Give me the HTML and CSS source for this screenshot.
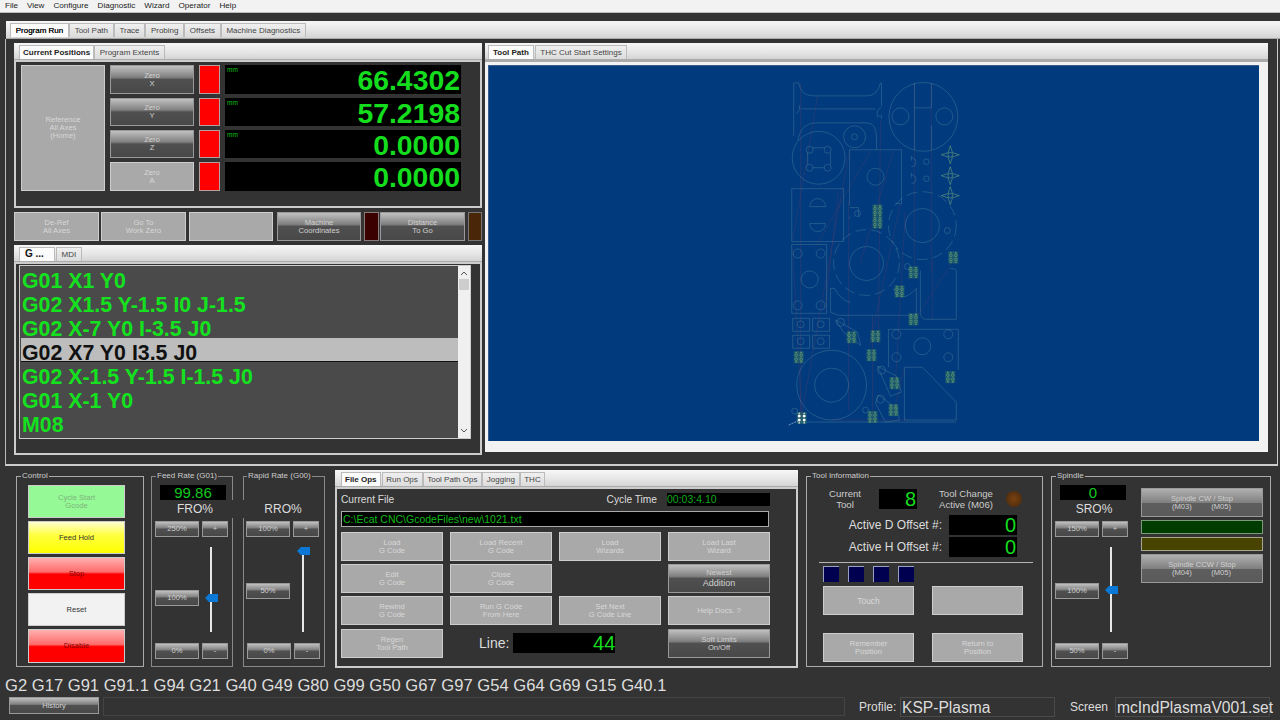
FILE: index.html
```html
<!DOCTYPE html>
<html lang="en">
<head>
<meta charset="utf-8">
<title>Mach4 Plasma</title>
<link rel="stylesheet" href="styles.css">
</head>
<body>
<nav class="menubar"><span>File</span><span>View</span><span>Configure</span><span>Diagnostic</span><span>Wizard</span><span>Operator</span><span>Help</span></nav>

<div class="tabstrip main-tabs">
  <span class="tab active">Program Run</span><span class="tab">Tool Path</span><span class="tab">Trace</span><span class="tab">Probing</span><span class="tab">Offsets</span><span class="tab">Machine Diagnostics</span>
</div>

<main class="main">
  <section class="left-col">
    <div class="tabstrip sub-tabs">
      <span class="tab active strong">Current Positions</span><span class="tab">Program Extents</span>
    </div>
    <div class="panel pos-panel">
      <button class="btn flat ref">Reference<br>All Axes<br>(Home)</button>
      <button class="btn grad">Zero<br>X</button><div class="led red"></div><div class="dro big"><small>mm</small>66.4302</div>
      <button class="btn grad">Zero<br>Y</button><div class="led red"></div><div class="dro big"><small>mm</small>57.2198</div>
      <button class="btn grad">Zero<br>Z</button><div class="led red"></div><div class="dro big"><small>mm</small>0.0000</div>
      <button class="btn flat">Zero<br>A</button><div class="led red"></div><div class="dro big">0.0000</div>
    </div>
    <div class="coord-row">
      <button class="btn flat">De-Ref<br>All Axes</button>
      <button class="btn flat">Go To<br>Work Zero</button>
      <button class="btn flat"></button>
      <button class="btn grad">Machine<br>Coordinates</button>
      <div class="led maroon"></div>
      <button class="btn grad">Distance<br>To Go</button>
      <div class="led brown"></div>
    </div>
    <div class="tabstrip sub-tabs">
      <span class="tab active gtab">G ...</span><span class="tab">MDI</span>
    </div>
    <div class="panel code-panel">
      <div class="code-list">
        <ol class="code-lines">
          <li>G01 X1 Y0</li>
          <li>G02 X1.5 Y-1.5 I0 J-1.5</li>
          <li>G02 X-7 Y0 I-3.5 J0</li>
          <li class="current">G02 X7 Y0 I3.5 J0</li>
          <li>G02 X-1.5 Y-1.5 I-1.5 J0</li>
          <li>G01 X-1 Y0</li>
          <li>M08</li>
        </ol>
        <div class="scrollbar">
          <svg class="chev" viewBox="0 0 8 6"><path d="M1 5 4 2l3 3" /></svg>
          <div class="scroll-thumb"></div>
          <svg class="chev" viewBox="0 0 8 6"><path d="M1 1l3 3 3-3" /></svg>
        </div>
      </div>
    </div>
  </section>

  <section class="right-col">
    <div class="tabstrip right-tabs">
      <span class="tab active strong">Tool Path</span><span class="tab">THC Cut Start Settings</span>
    </div>
    <div class="path-frame">
      <div class="path-view">
        <svg class="path-svg" viewBox="488 65 771 376">
          <defs>
            <g id="dots">
              <rect class="dot-bg" x="-5" y="-6" width="10" height="12"/>
              <circle cx="-2.500" cy="-2" r="1.300"/><circle cx="2.500" cy="-2" r="1.300"/><circle cx="-2.500" cy="2" r="1.300"/><circle cx="2.500" cy="2" r="1.300"/><circle cx="-2.500" cy="-4.800" r=".6"/><circle cx="2.500" cy="4.800" r=".6"/><circle cx="-2.500" cy="4.800" r=".6"/><circle cx="2.500" cy="-4.800" r=".6"/>
            </g>
            <g id="star">
              <path d="M0-9 2.200-2.200 9 0 2.200 2.200 0 9-2.200 2.200-9 0-2.200-2.200Z"/><circle r="2.400"/>
            </g>
          </defs>
          <g class="rapid">
            <path d="M800 82V420M801 419 792 248M817 95 792 240M849 149 800 419M870 150 816 245M893 150 860 262M900 203 869 345M914 82V270M931 82V270M905 210 895 383M953 260 914 320M880 120 878 345M838 190 824 310M932 260 932 320M848 200V410M872 315 872 417M904 367 894 410M908 420 830 420"/>
          </g>
          <g class="cut">
            <path d="M793 82V135M793 82H798Q800 95 813 95H866Q877 95 880 82H881V105M799 104Q800 109 796 113M800 108H875M881 106Q875 110 877 116 879 114 881 115V118"/>
            <path d="M797 140Q800 122 815 122H866Q876 122 876 137V149"/>
            <circle cx="923" cy="116" r="34.500"/>
            <path d="M914 82V107H931V82M914 107V140M931 125V149M914 140V149"/>
            <circle cx="900" cy="115.500" r="8.500"/><circle cx="944" cy="115.500" r="8.500"/>
            <circle cx="818" cy="157" r="26.500"/>
            <path d="M812 147H824M830 152V164M824 167H812M807 164V152"/>
            <circle cx="809" cy="149" r="3.500"/><circle cx="827" cy="149" r="3.500"/><circle cx="809" cy="167" r="3.500"/><circle cx="827" cy="167" r="3.500"/>
            <circle cx="854" cy="136" r="11"/><circle cx="854" cy="136" r="3"/>
            <path d="M849 149H901V203H895M849 149V205"/>
            <circle cx="875" cy="176" r="8.500"/>
            <path d="M911 157A4.500 4.500 0 0 1 911 166M911 174A4.500 4.500 0 0 1 911 183M911 155V160M911 172V177"/>
            <circle cx="926" cy="161" r="2.800"/><circle cx="926" cy="178" r="2.800"/>
            <path d="M791 188H843V241H791ZM809 206A8 8 0 0 1 825 206H809ZM809 223A8 8 0 0 0 825 223H809Z"/>
            <circle cx="922" cy="225" r="17"/>
            <circle class="dash" cx="922" cy="225" r="34"/>
            <circle class="dash" cx="866" cy="262" r="33"/>
            <circle cx="866" cy="263" r="17"/>
            <path d="M791 244H826V313H791Z"/>
            <circle cx="797" cy="253" r="4.500"/><circle cx="820" cy="253" r="4.500"/><circle cx="809" cy="279" r="8.500"/><circle cx="797" cy="305" r="4.500"/><circle cx="820" cy="305" r="4.500"/>
            <path d="M849 207H858M858 216V207M849 218V216"/><circle cx="857" cy="213" r="3"/>
            <path d="M792 318H809V331H792ZM812 318H829V331H812ZM792 335H809V348H792ZM812 335H829V348H812Z"/>
            <circle cx="800" cy="324" r="3.500"/><circle cx="820" cy="324" r="3.500"/><circle cx="800" cy="341" r="3.500"/><circle cx="820" cy="341" r="3.500"/>
            <circle cx="831" cy="385" r="35"/><circle cx="831" cy="385" r="17"/>
            <path d="M830 288V312L838 315H916V288M830 288H834Q840 300 850 302 M893 288Q900 305 916 288"/>
            <path d="M920 270V312Q920 319 926 319H956V270Q956 268 950 268"/>
            <path d="M888 329H958M888 329V367M958 329V370"/>
            <circle cx="896" cy="334" r="4.500"/><circle cx="948" cy="334" r="4.500"/><circle cx="922" cy="346" r="8.500"/><circle cx="896" cy="357" r="4.500"/><circle cx="948" cy="357" r="4.500"/>
            <path d="M904 367H922L956 402V420H904Z"/>
            <path d="M836 320 857 332 860 345 843 332 835 320ZM877 366 896 376 901 392 890 396ZM878 395 896 408 899 420 885 422 875 403Z"/>
            <circle cx="840" cy="322" r="4"/><circle cx="881" cy="370" r="4"/><circle cx="880" cy="399" r="4"/><circle cx="865" cy="410" r="3"/><circle cx="794" cy="411" r="3"/><circle cx="947" cy="230" r="3"/><circle cx="907" cy="266" r="3"/>
            <path d="M797 422H956"/>
          </g>
          <g class="marks">
            <use href="#star" x="950" y="154"/><use href="#star" x="950" y="175"/><use href="#star" x="950" y="195"/>
            <use href="#dots" x="877" y="210"/><use href="#dots" x="877" y="222"/><use href="#dots" x="953" y="257"/><use href="#dots" x="913" y="272"/><use href="#dots" x="899" y="291"/><use href="#dots" x="913" y="319"/><use href="#dots" x="798" y="357"/><use href="#dots" x="851" y="337"/><use href="#dots" x="875" y="336"/><use href="#dots" x="871" y="355"/><use href="#dots" x="894" y="383"/><use href="#dots" x="950" y="377"/><use href="#dots" x="872" y="417"/><use href="#dots" x="893" y="410"/>
          </g>
          <use class="tool-mark" href="#dots" x="801" y="418"/>
          <path class="tool-lead" d="M788 425 799 420"/>
        </svg>
      </div>
    </div>
  </section>
</main>

<section class="lower">
  <fieldset class="group control">
    <legend>Control</legend>
    <div class="control-stack">
      <button class="btn c-green">Cycle Start<br>Gcode</button>
      <button class="btn c-yellow">Feed Hold</button>
      <button class="btn c-red">Stop</button>
      <button class="btn c-white">Reset</button>
      <button class="btn c-red tall">Disable</button>
    </div>
  </fieldset>

  <fieldset class="group rate feed">
    <legend>Feed Rate (G01)</legend>
    <div class="dro rate-dro center">99.86</div>
    <div class="rate-label over-right">FRO%</div>
    <div class="rate-row"><button class="btn grad">250%</button><button class="btn grad small">+</button></div>
    <div class="rate-mid">
      <button class="btn grad mid-100">100%</button>
      <div class="slider"><div class="thumb thumb-mid"></div></div>
    </div>
    <div class="rate-row"><button class="btn grad">0%</button><button class="btn grad small">-</button></div>
  </fieldset>

  <fieldset class="group rate rapid-rate">
    <legend>Rapid Rate (G00)</legend>
    <div class="dro-spacer"></div>
    <div class="rate-label over-left">RRO%</div>
    <div class="rate-row"><button class="btn grad">100%</button><button class="btn grad small">+</button></div>
    <div class="rate-mid">
      <button class="btn grad mid-50">50%</button>
      <div class="slider"><div class="thumb thumb-top"></div></div>
    </div>
    <div class="rate-row indent"><button class="btn grad">0%</button><button class="btn grad small">-</button></div>
  </fieldset>

  <div class="fileops">
    <div class="tabstrip file-tabs">
      <span class="tab active strong">File Ops</span><span class="tab">Run Ops</span><span class="tab">Tool Path Ops</span><span class="tab">Jogging</span><span class="tab">THC</span>
    </div>
    <div class="panel file-panel">
      <div class="file-head">
        <span>Current File</span>
        <span class="cycle">Cycle Time</span>
        <div class="dro thin-dro">00:03:4.10</div>
      </div>
      <div class="path-bar">C:\Ecat CNC\GcodeFiles\new\1021.txt</div>
      <div class="file-grid">
        <button class="btn flat">Load<br>G Code</button>
        <button class="btn flat">Load Recent<br>G Code</button>
        <button class="btn flat">Load<br>Wizards</button>
        <button class="btn flat">Load Last<br>Wizard</button>
        <button class="btn flat">Edit<br>G Code</button>
        <button class="btn flat">Close<br>G Code</button>
        <div></div>
        <button class="btn grad">Newest<br><span class="larger">Addition</span></button>
        <button class="btn flat">Rewind<br>G Code</button>
        <button class="btn flat">Run G Code<br>From Here</button>
        <button class="btn flat">Set Next<br>G Code Line</button>
        <button class="btn flat">Help Docs. ?</button>
        <button class="btn flat last-row">Regen<br>Tool Path</button>
        <div class="line-box last-row"><span>Line:</span><div class="dro line-dro">44</div></div>
        <button class="btn grad last-row">Soft Limits<br>On/Off</button>
      </div>
    </div>
  </div>

  <fieldset class="group toolinfo">
    <legend>Tool Information</legend>
    <div class="tool-body">
      <div class="tool-top">
        <div class="tool-cap">Current<br>Tool</div>
        <div class="dro tool-dro">8</div>
        <div class="tool-cap change">Tool Change<br>Active (M06)</div>
        <div class="lamp"></div>
      </div>
      <div class="offset-row"><span>Active D Offset #:</span><div class="dro offset-dro">0</div></div>
      <div class="offset-row"><span>Active H Offset #:</span><div class="dro offset-dro">0</div></div>
      <hr class="rule">
      <div class="squares"><i></i><i></i><i></i><i></i></div>
      <div class="touch-grid">
        <button class="btn flat touch">Touch</button>
        <button class="btn flat"></button>
        <button class="btn flat">Remember<br>Position</button>
        <button class="btn flat">Return to<br>Position</button>
      </div>
    </div>
  </fieldset>

  <fieldset class="group spindle">
    <legend>Spindle</legend>
    <div class="spindle-wrap">
      <div class="spindle-left">
        <div class="dro rate-dro center">0</div>
        <div class="rate-label">SRO%</div>
        <div class="rate-row"><button class="btn grad">150%</button><button class="btn grad small">+</button></div>
        <div class="rate-mid">
          <button class="btn grad mid-50">100%</button>
          <div class="slider"><div class="thumb thumb-spin"></div></div>
        </div>
        <div class="rate-row"><button class="btn grad">50%</button><button class="btn grad small">-</button></div>
      </div>
      <div class="spindle-right">
        <button class="btn grad soft"><span class="two-col-title">Spindle CW / Stop</span><span class="two-col"><span>(M03)</span><span>(M05)</span></span></button>
        <div class="bar bar-green"></div>
        <div class="bar bar-olive"></div>
        <button class="btn grad soft"><span class="two-col-title">Spindle CCW / Stop</span><span class="two-col"><span>(M04)</span><span>(M05)</span></span></button>
      </div>
    </div>
  </fieldset>
</section>

<div class="gbar">G2 G17 G91 G91.1 G94 G21 G40 G49 G80 G99 G50 G67 G97 G54 G64 G69 G15 G40.1</div>

<footer class="footer">
  <button class="btn grad history">History</button>
  <div class="status"></div>
  <span class="foot-label profile-label">Profile:</span>
  <div class="foot-field profile-field">KSP-Plasma</div>
  <span class="foot-label screen-label">Screen</span>
  <div class="foot-field">mcIndPlasmaV001.set</div>
</footer>
</body>
</html>
```

FILE: styles.css
```css
* { box-sizing: border-box; }
html, body { margin: 0; padding: 0; }
body {
  width: 1280px;
  height: 720px;
  overflow: hidden;
  background: #333;
  color: #ddd;
  font-family: "Liberation Sans", Arial, sans-serif;
  font-size: 8px;
}

.menubar {
  height: 13px;
  background: #f2f2f2;
  color: #222;
  display: flex;
  padding-left: 5px;
  gap: 9px;
  font-size: 8.100px;
  line-height: 12px;
  border-bottom: 1px solid #bbb;
}

.tabstrip {
  display: flex;
  align-items: flex-end;
  background: linear-gradient(#f6f6f6, #e8e8e8 50%, #d4d4d4);
  border-bottom: 1px solid #aaa;
}
.tab {
  height: 14px;
  padding: 0 5px;
  font-size: 8px;
  line-height: 13px;
  color: #444;
  background: linear-gradient(#efefef, #dcdcdc);
  border: 1px solid #bbb;
  border-bottom: 0;
  white-space: nowrap;
}
.tab.active { background: #fbfbfb; color: #222; border-bottom: 0; }
.tab.strong { font-weight: bold; }
.main-tabs .tab { padding: 0 4.700px; }
.main-tabs .tab.active { color: #111; text-shadow: 0 0 .4px #111; }

.main-tabs {
  margin: 8px 0 0 6px;
  height: 18px;
  padding-left: 4px;
  padding-bottom: 1px;
}

.main {
  width: 1273px;
  height: 427px;
  margin-left: 5px;
  border: 1px solid #bbb;
  border-top: 0;
  border-bottom-width: 2px;
  border-bottom-color: #ccc;
  border-right-color: #ccc;
  display: flex;
  align-items: flex-start;
  padding: 4px 0 0 8px;
}

.left-col { width: 468px; display: flex; flex-direction: column; }
.sub-tabs { height: 17px; padding-left: 5px; }
.sub-tabs .tab { padding: 0 4.500px; margin-right: 1px; }
.sub-tabs .tab.strong { padding: 0 3px; margin-right: 0; }

.panel {
  background: #333;
  border: 2px solid #ccc;
}

.pos-panel {
  height: 148px;
  padding: 3px 0 0 5px;
  display: grid;
  grid-template-columns: 84px 84px 21px 236px;
  grid-template-rows: 29px 28px 28px 29px;
  column-gap: 5px;
  row-gap: 4px;
}
.ref { grid-row: 1 / span 4; }

.btn {
  display: block;
  margin: 0;
  padding: 0;
  font-family: "Liberation Sans", Arial, sans-serif;
  font-size: 7.6px;
  line-height: 8px;
  text-align: center;
  cursor: default;
  min-width: 0;
}
.flat {
  background: #a9a9a9;
  color: #d8d8d8;
  border: 1px solid #cdcdcd;
}
.grad {
  background: linear-gradient(#c0c0c0, #808080 42%, #505050 50%, #484848);
  color: #d0d0d0;
  border: 1px solid #999;
}

.led { border: 1px solid #b9a0a0; }
.led.red { background: #ff0000; }
.led.maroon { background: #3a0000; border-color: #8a7a7a; }
.led.brown { background: #4a2608; border-color: #777; }

.dro {
  background: #000;
  color: #14dd1e;
  text-align: right;
}
.dro.big {
  position: relative;
  font-size: 28.4px;
  font-weight: bold;
  line-height: 30px;
  padding-right: 1px;
}
.dro.big small {
  position: absolute;
  left: 2px;
  top: 1px;
  font-size: 6.500px;
  line-height: 7px;
  font-weight: normal;
  color: #0cc014;
}

.coord-row {
  display: flex;
  height: 29px;
  margin: 4px 0;
  width: 469px;
}
.coord-row > * { flex: none; }
.coord-row > :nth-child(1) { width: 85px; }
.coord-row > :nth-child(2) { width: 85px; margin-left: 2px; }
.coord-row > :nth-child(3) { width: 84px; margin-left: 3px; }
.coord-row > :nth-child(4) { width: 84px; margin-left: 4px; }
.coord-row > :nth-child(5) { width: 15px; margin-left: 3px; }
.coord-row > :nth-child(6) { width: 85px; margin-left: 1px; }
.coord-row > :nth-child(7) { width: 14px; margin-left: 3px; }

.sub-tabs .gtab { font-weight: bold; font-size: 10px; color: #111; width: 36px; line-height: 12px; padding: 0 5px; }

.code-panel { height: 193px; padding: 1px 0 0 3px; }
.code-list {
  width: 452px;
  height: 174px;
  background: #4a4a4a;
  border: 1px solid #ccc;
  display: flex;
}
.code-lines {
  list-style: none;
  margin: 0;
  padding: 3px 0 0 1px;
  width: 438px;
  font-size: 21.33px;
  font-weight: bold;
  line-height: 24px;
  color: #14e21e;
  white-space: nowrap;
}
.code-lines li { padding-left: 1px; height: 24px; }
.code-lines .current {
  background: #bdbdbd;
  color: #111;
  border-bottom: 1px solid #111;
  margin: -3px 0 3px;
  padding-top: 3px;
}
.scrollbar {
  width: 12px;
  background: #f0f0f0;
  display: flex;
  flex-direction: column;
  align-items: center;
  padding: 4px 0;
}
.chev { width: 8px; height: 6px; flex: none; }
.chev path { fill: none; stroke: #555; stroke-width: 1; }
.scroll-thumb { width: 10px; height: 11px; background: #cdcdcd; margin: 3px 0 auto; }

.right-col { width: 783px; margin-left: 3px; }
.right-tabs { height: 17px; padding-left: 3px; }
.right-tabs .tab { padding: 0 4.500px; margin-right: 1px; }
.right-tabs .tab.strong { padding: 0 4px; }
.path-frame {
  height: 392px;
  background: #f2f2f2;
  border-top: 2px solid #aaa;
  padding: 3px 10px 11px 3px;
}
.path-view {
  width: 771px;
  height: 376px;
  background: #023a7e;
  border-left: 1px solid #3b5c8a;
  border-top: 1px solid #3b5c8a;
}
.path-svg { display: block; width: 100%; height: 100%; filter: blur(.3px); }
.path-svg .cut { fill: none; stroke: #5e97a2; stroke-width: .55; stroke-opacity: .62; }
.path-svg .dash { stroke-dasharray: 11 5; }
.path-svg .rapid { fill: none; stroke: #6a4060; stroke-width: .5; stroke-opacity: .55; }
.path-svg .marks { fill: none; stroke: #8fc97a; stroke-width: .5; stroke-opacity: .85; }
.path-svg .dot-bg { fill: #3c7f5c; fill-opacity: .45; stroke: none; }
.path-svg .tool-mark { fill: #fff; stroke: #fff; stroke-width: .3; }
.path-svg .tool-mark .dot-bg { fill: none; }
.path-svg .tool-lead { stroke: #cfe0f0; stroke-width: .6; stroke-dasharray: 2 1; fill: none; }

.lower {
  display: flex;
  align-items: flex-start;
  padding: 5px 0 0 16px;
  height: 209px;
}
.group {
  margin: 0;
  padding: 0;
  min-width: 0;
  height: 196px;
  border: 1px solid #aaa;
  background: transparent;
}
.group legend {
  margin-left: 4px;
  padding: 0 1px;
  font-size: 8px;
  line-height: 10px;
  height: 10px;
  color: #ccc;
}

.control { width: 128px; margin-right: 7px; }
.control-stack {
  display: flex;
  flex-direction: column;
  gap: 3px;
  padding: 4px 0 0 11px;
}
.control-stack .btn { width: 97px; height: 33px; border: 1px solid #ccc; }
.control-stack .tall { height: 34px; }
.c-green { background: #95f995; color: #7db37d; }
.c-yellow { background: linear-gradient(#ffffd0, #ffff40 42%, #ffff00); color: #333; }
.c-red { background: linear-gradient(#ffb0b0, #ff6c6c 45%, #ff0000 52%); color: #8a0000; }
.c-white { background: #f2f2f2; color: #333; }

.rate { width: 82px; margin-right: 10px; padding: 0 0 0 3px; border-color: #888; }
.rate legend { margin-left: 1px; }
.rapid-rate { padding-left: 2px; }
.rate-dro {
  width: 66px;
  height: 15px;
  margin: 4px 0 0 5px;
  font-size: 15px;
  line-height: 15px;
  color: #14c81e;
}
.center { text-align: center; }
.dro-spacer { height: 15px; margin-top: 4px; }
.rate-label {
  position: relative;
  height: 18px;
  text-align: center;
  font-size: 12px;
  line-height: 18px;
  color: #ddd;
  background: #333;
  margin: 0 0 3px -3px;
  width: 80px;
}
.over-right { width: 85px; margin-left: -2px; padding-left: 1px; padding-right: 2px; }
.over-left { width: 90px; margin-left: -12px; padding-left: 8px; }
.rate-row { display: flex; gap: 3px; height: 16px; }
.rate-row .btn { width: 44px; }
.rate-row .small { width: 26px; }
.rate-row.indent { padding-left: 1px; }
.rate-mid { height: 106px; display: flex; position: relative; }
.mid-100 { width: 44px; height: 16px; margin-top: 53px; }
.mid-50 { width: 44px; height: 16px; margin-top: 46px; }
.slider {
  position: relative;
  width: 2px;
  height: 85px;
  margin: 10px 0 0 11px;
  background: #e6e6e6;
}
.rapid-rate .slider { margin-left: 12px; }
.thumb {
  position: absolute;
  left: -5px;
  width: 13px;
  height: 8px;
  background: #0a78d4;
  clip-path: polygon(30% 0, 100% 0, 100% 100%, 30% 100%, 0 50%);
}
.thumb-mid { top: 47px; }
.thumb-top { top: 0; }
.thumb-spin { top: 39px; }

.fileops { width: 463px; margin: -1px 8px 0 0; }
.file-tabs { height: 17px; padding-left: 6px; }
.file-tabs .tab { padding: 0 3.700px; }
.file-tabs .tab.strong { padding: 0 3px; margin-right: 1px; }
.file-panel { height: 181px; padding: 4px 0 0 4px; }
.file-head {
  display: flex;
  align-items: center;
  width: 429px;
  height: 13px;
  font-size: 10.200px;
  color: #ddd;
}
.cycle { margin-left: auto; margin-right: 10px; }
.thin-dro {
  width: 103px;
  height: 13px;
  text-align: left;
  font-size: 10.500px;
  line-height: 13px;
  color: #0fa818;
}
.path-bar {
  width: 428px;
  height: 16px;
  margin-top: 5px;
  background: #000;
  border: 1px solid #aaa;
  color: #10b818;
  font-size: 10.500px;
  line-height: 14px;
  padding-left: 1px;
}
.file-grid {
  display: grid;
  grid-template-columns: repeat(4, 102px);
  grid-template-rows: 29px 29px 29px 30px;
  column-gap: 7px;
  row-gap: 3px;
  margin-top: 5px;
}
.last-row { margin-top: 1px; }
.line-box {
  grid-column: 2 / span 2;
  display: flex;
  align-items: center;
  padding: 0 0 1px 29px;
  gap: 4px;
  font-size: 14px;
  color: #ddd;
}
.line-dro {
  width: 102px;
  height: 20px;
  font-size: 20px;
  line-height: 21px;
  padding-right: 0;
}
.larger { font-size: 9px; line-height: 10px; }
.file-grid .btn { line-height: 8px; }
.file-grid .btn:has(.larger) { line-height: 10px; }

.toolinfo { width: 237px; margin-right: 8px; }
.tool-body { padding-left: 16px; }
.tool-top {
  display: flex;
  align-items: center;
  height: 21px;
  margin-top: 7px;
  font-size: 9.600px;
  line-height: 11px;
  white-space: nowrap;
}
.tool-cap { width: 44px; text-align: center; color: #ccc; }
.tool-dro {
  width: 38px;
  height: 20px;
  margin-left: 12px;
  font-size: 20px;
  line-height: 21px;
  padding-right: 1px;
}
.change { width: 54px; margin-left: 22px; }
.lamp {
  width: 16px;
  height: 16px;
  margin-left: 13px;
  border-radius: 50%;
  background: radial-gradient(circle, #7a4010, #54300f 70%, #444);
}
.offset-row {
  display: flex;
  align-items: center;
  justify-content: flex-end;
  gap: 7px;
  width: 194px;
  height: 20px;
  margin-top: 2px;
  font-size: 12px;
  color: #ddd;
}
.tool-top + .offset-row { margin-top: 6px; }
.offset-dro {
  width: 68px;
  height: 20px;
  flex: none;
  font-size: 20px;
  line-height: 21px;
  padding-right: 1px;
}
.rule {
  margin: 5px 0 0 -4px;
  width: 214px;
  height: 1px;
  border: 0;
  background: #b5b5b5;
}
.squares { display: flex; gap: 9px; margin-top: 3px; height: 16px; }
.squares i {
  width: 16px;
  height: 16px;
  background: #000050;
  border-top: 1px solid #9aa0c0;
  border-left: 1px solid #9aa0c0;
}
.touch-grid {
  display: grid;
  grid-template-columns: 91px 91px;
  grid-template-rows: 29px 29px;
  column-gap: 18px;
  row-gap: 18px;
  margin-top: 4px;
}
.touch { font-size: 8.500px; }

.spindle { width: 220px; border-color: #aaa; }
.spindle-wrap { display: flex; padding-left: 3px; }
.spindle-left { width: 86px; flex: none; }
.spindle-left .rate-label { width: 78px; background: none; margin: 0 0 3px 0; }
.spindle-right {
  width: 122px;
  padding-top: 7px;
  display: flex;
  flex-direction: column;
}
.soft { height: 29px; background: linear-gradient(#b0b0b0, #808080 50%, #5e5e5e 52%, #5a5a5a); }
.two-col-title { display: block; }
.two-col { display: flex; justify-content: space-between; padding: 0 31px 0 30px; }
.bar { height: 14px; border: 1px solid #a8a890; margin-top: 3px; }
.bar-green { background: #003c00; border-color: #7a9a7a; }
.bar-olive { background: #484400; margin-bottom: 3px; }

.gbar {
  height: 17px;
  margin-top: 2px;
  padding-left: 5px;
  font-size: 16.600px;
  line-height: 17px;
  color: #ddd;
  white-space: nowrap;
}

.footer {
  display: flex;
  align-items: flex-start;
  height: 26px;
  padding: 3px 0 0 9px;
}
.history { width: 90px; height: 17px; }
.status {
  width: 742px;
  height: 19px;
  margin: 0 0 0 4px;
  border: 1px solid #444;
}
.foot-label { font-size: 12px; line-height: 20px; color: #ddd; }
.profile-label { margin-left: 14px; width: 41px; }
.screen-label { margin-left: 15px; width: 45px; }
.foot-field {
  width: 155px;
  height: 20px;
  border: 1px solid #4a4a4a;
  font-size: 15.600px;
  line-height: 20px;
  padding-left: 1px;
  color: #ddd;
  white-space: nowrap;
}
```
